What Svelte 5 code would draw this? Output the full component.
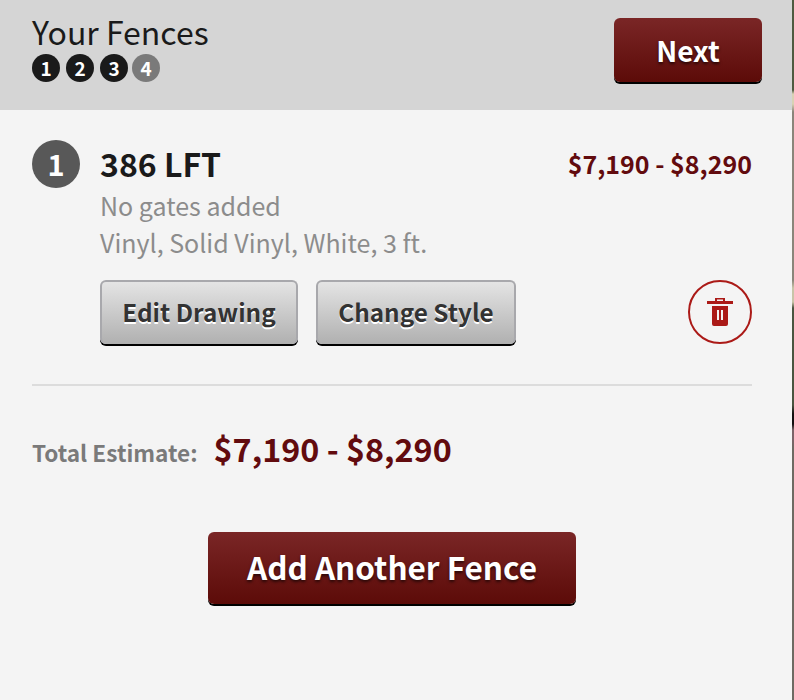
<script lang="ts">
    // Progress steps shown under the header title.
    const steps = [
        { n: 1, done: true },
        { n: 2, done: true },
        { n: 3, done: true },
        { n: 4, done: false },
    ];

    const estimate = "$7,190 - $8,290";

    const fences = [
        {
            id: 1,
            length: "386 LFT",
            gates: "No gates added",
            style: "Vinyl, Solid Vinyl, White, 3 ft.",
            price: estimate,
        },
    ];
</script>

<div class="shell">
    <div class="panel">
        <header class="top">
            <div class="heading">
                <h1>Your Fences</h1>
                <div class="steps">
                    {#each steps as step}
                        <span class="step" class:todo={!step.done}>{step.n}</span>
                    {/each}
                </div>
            </div>
            <button class="btn red next">Next</button>
        </header>

        <section class="body">
            {#each fences as fence}
                <div class="fence">
                    <span class="badge">{fence.id}</span>
                    <div class="info">
                        <div class="title-row">
                            <h2>{fence.length}</h2>
                            <span class="price">{fence.price}</span>
                        </div>
                        <p class="meta first">{fence.gates}</p>
                        <p class="meta">{fence.style}</p>
                        <div class="actions">
                            <button class="btn grey">Edit Drawing</button>
                            <button class="btn grey">Change Style</button>
                            <button class="trash" aria-label="Delete fence">
                                <svg width="26" height="28" viewBox="0 0 26 28">
                                    <path
                                        fill="#ab1a17"
                                        fill-rule="evenodd"
                                        d="M8 0h10v3h8v3H0V3h8zm2 1.5V3h6V1.500zM5 8h16v18a2 2 0 0 1-2 2H7a2 2 0 0 1-2-2zm5 4v10h2V12zm4 0v10h2V12z"
                                    />
                                </svg>
                            </button>
                        </div>
                    </div>
                </div>
            {/each}

            <div class="total">
                <span class="total-label">Total Estimate:</span>
                <span class="total-value">{estimate}</span>
            </div>

            <div class="add-wrap">
                <button class="btn red add">Add Another Fence</button>
            </div>
        </section>
    </div>
    <div class="edge"></div>
</div>

<style>
    :global(body) {
        margin: 0;
        background: #f4f4f4;
    }

    .shell {
        display: flex;
        width: 794px;
        height: 700px;
        overflow: hidden;
        font-family: "Noto Sans CJK SC", "Open Sans", sans-serif;
        color: #1a1a1a;
    }

    .panel {
        flex: 1;
        background: #f4f4f4;
    }

    /* sliver of the page photo behind the panel */
    .edge {
        width: 2px;
        background: linear-gradient(
            #4f5a40 0 90px,
            #d8d2b4 94px 104px,
            #8a857a 112px 280px,
            #c8c4a8 288px 302px,
            #4a5540 308px 405px,
            #141010 414px 424px,
            #7c6468 430px 440px,
            #6e6a62 448px 700px
        );
    }

    .top {
        display: flex;
        justify-content: space-between;
        height: 110px;
        box-sizing: border-box;
        padding: 18px 30px 0 32px;
        background: #d5d5d5;
    }

    h1 {
        margin: -2px 0 0;
        font-size: 32px;
        font-weight: 400;
        line-height: 30px;
    }

    .steps {
        display: flex;
        gap: 6px;
        margin-top: 8px;
    }

    .step {
        width: 28px;
        height: 28px;
        border-radius: 50%;
        background: #1a1a1a;
        color: #fff;
        font-size: 19px;
        font-weight: 700;
        line-height: 28px;
        text-align: center;
    }

    .step.todo {
        background: #7a7a7a;
        margin-left: -2px;
    }

    .btn {
        border: none;
        border-radius: 6px;
        font-family: inherit;
        font-weight: 700;
        padding: 0;
        cursor: pointer;
    }

    .red {
        background: linear-gradient(#7a2626, #5c0b08);
        box-shadow: 0 2px 0 #000;
        color: #fff;
        text-shadow: 0 2px 3px rgba(0, 0, 0, 0.6);
    }

    .next {
        width: 148px;
        height: 64px;
        font-size: 28px;
        line-height: 64px;
    }

    .body {
        padding: 30px 40px 0 32px;
    }

    .fence {
        display: flex;
        gap: 12px;
        padding-bottom: 40px;
        border-bottom: 2px solid #dcdcdc;
    }

    .badge {
        flex: none;
        width: 48px;
        height: 48px;
        border-radius: 50%;
        background: #585858;
        color: #fff;
        font-size: 29px;
        font-weight: 700;
        line-height: 46px;
        text-align: center;
    }

    .info {
        flex: 1;
        margin-left: 8px;
    }

    .title-row {
        display: flex;
        justify-content: space-between;
        align-items: center;
        height: 46px;
    }

    h2 {
        margin: 0;
        font-size: 32px;
        font-weight: 700;
        line-height: 44px;
    }

    .price {
        color: #620b0e;
        font-size: 25px;
        font-weight: 700;
        line-height: 46px;
    }

    .meta {
        margin: 0;
        color: #8c8c8c;
        font-size: 25px;
        line-height: 37px;
    }

    .meta.first {
        margin-top: 1px;
    }

    .actions {
        display: flex;
        align-items: center;
        gap: 18px;
        margin-top: 19px;
    }

    .grey {
        height: 64px;
        box-sizing: border-box;
        border: 2px solid #a8a8ac;
        border-bottom: none;
        padding-bottom: 4px;
        background: linear-gradient(#e4e4e4, #b0b0b0);
        box-shadow: 0 2px 0 #000;
        color: #333;
        font-size: 24.300px;
        text-shadow: 0 2px 0 #fff;
    }

    .grey:nth-child(1) {
        width: 198px;
    }

    .grey:nth-child(2) {
        width: 200px;
    }

    .trash {
        display: flex;
        align-items: center;
        justify-content: center;
        width: 64px;
        height: 64px;
        box-sizing: border-box;
        margin-left: auto;
        padding: 0;
        background: none;
        border: 2px solid #ab1a17;
        border-radius: 50%;
        cursor: pointer;
    }

    .total {
        display: flex;
        align-items: baseline;
        gap: 16px;
        margin-top: 38px;
        line-height: 48px;
    }

    .total-label {
        color: #7a7a7a;
        font-size: 22.600px;
        font-weight: 700;
    }

    .total-value {
        color: #620b0e;
        font-size: 32.300px;
        font-weight: 700;
    }

    .add-wrap {
        display: flex;
        justify-content: center;
        margin-top: 55px;
    }

    .add {
        width: 368px;
        height: 72px;
        padding-bottom: 4px;
        font-size: 31.500px;
    }
</style>
